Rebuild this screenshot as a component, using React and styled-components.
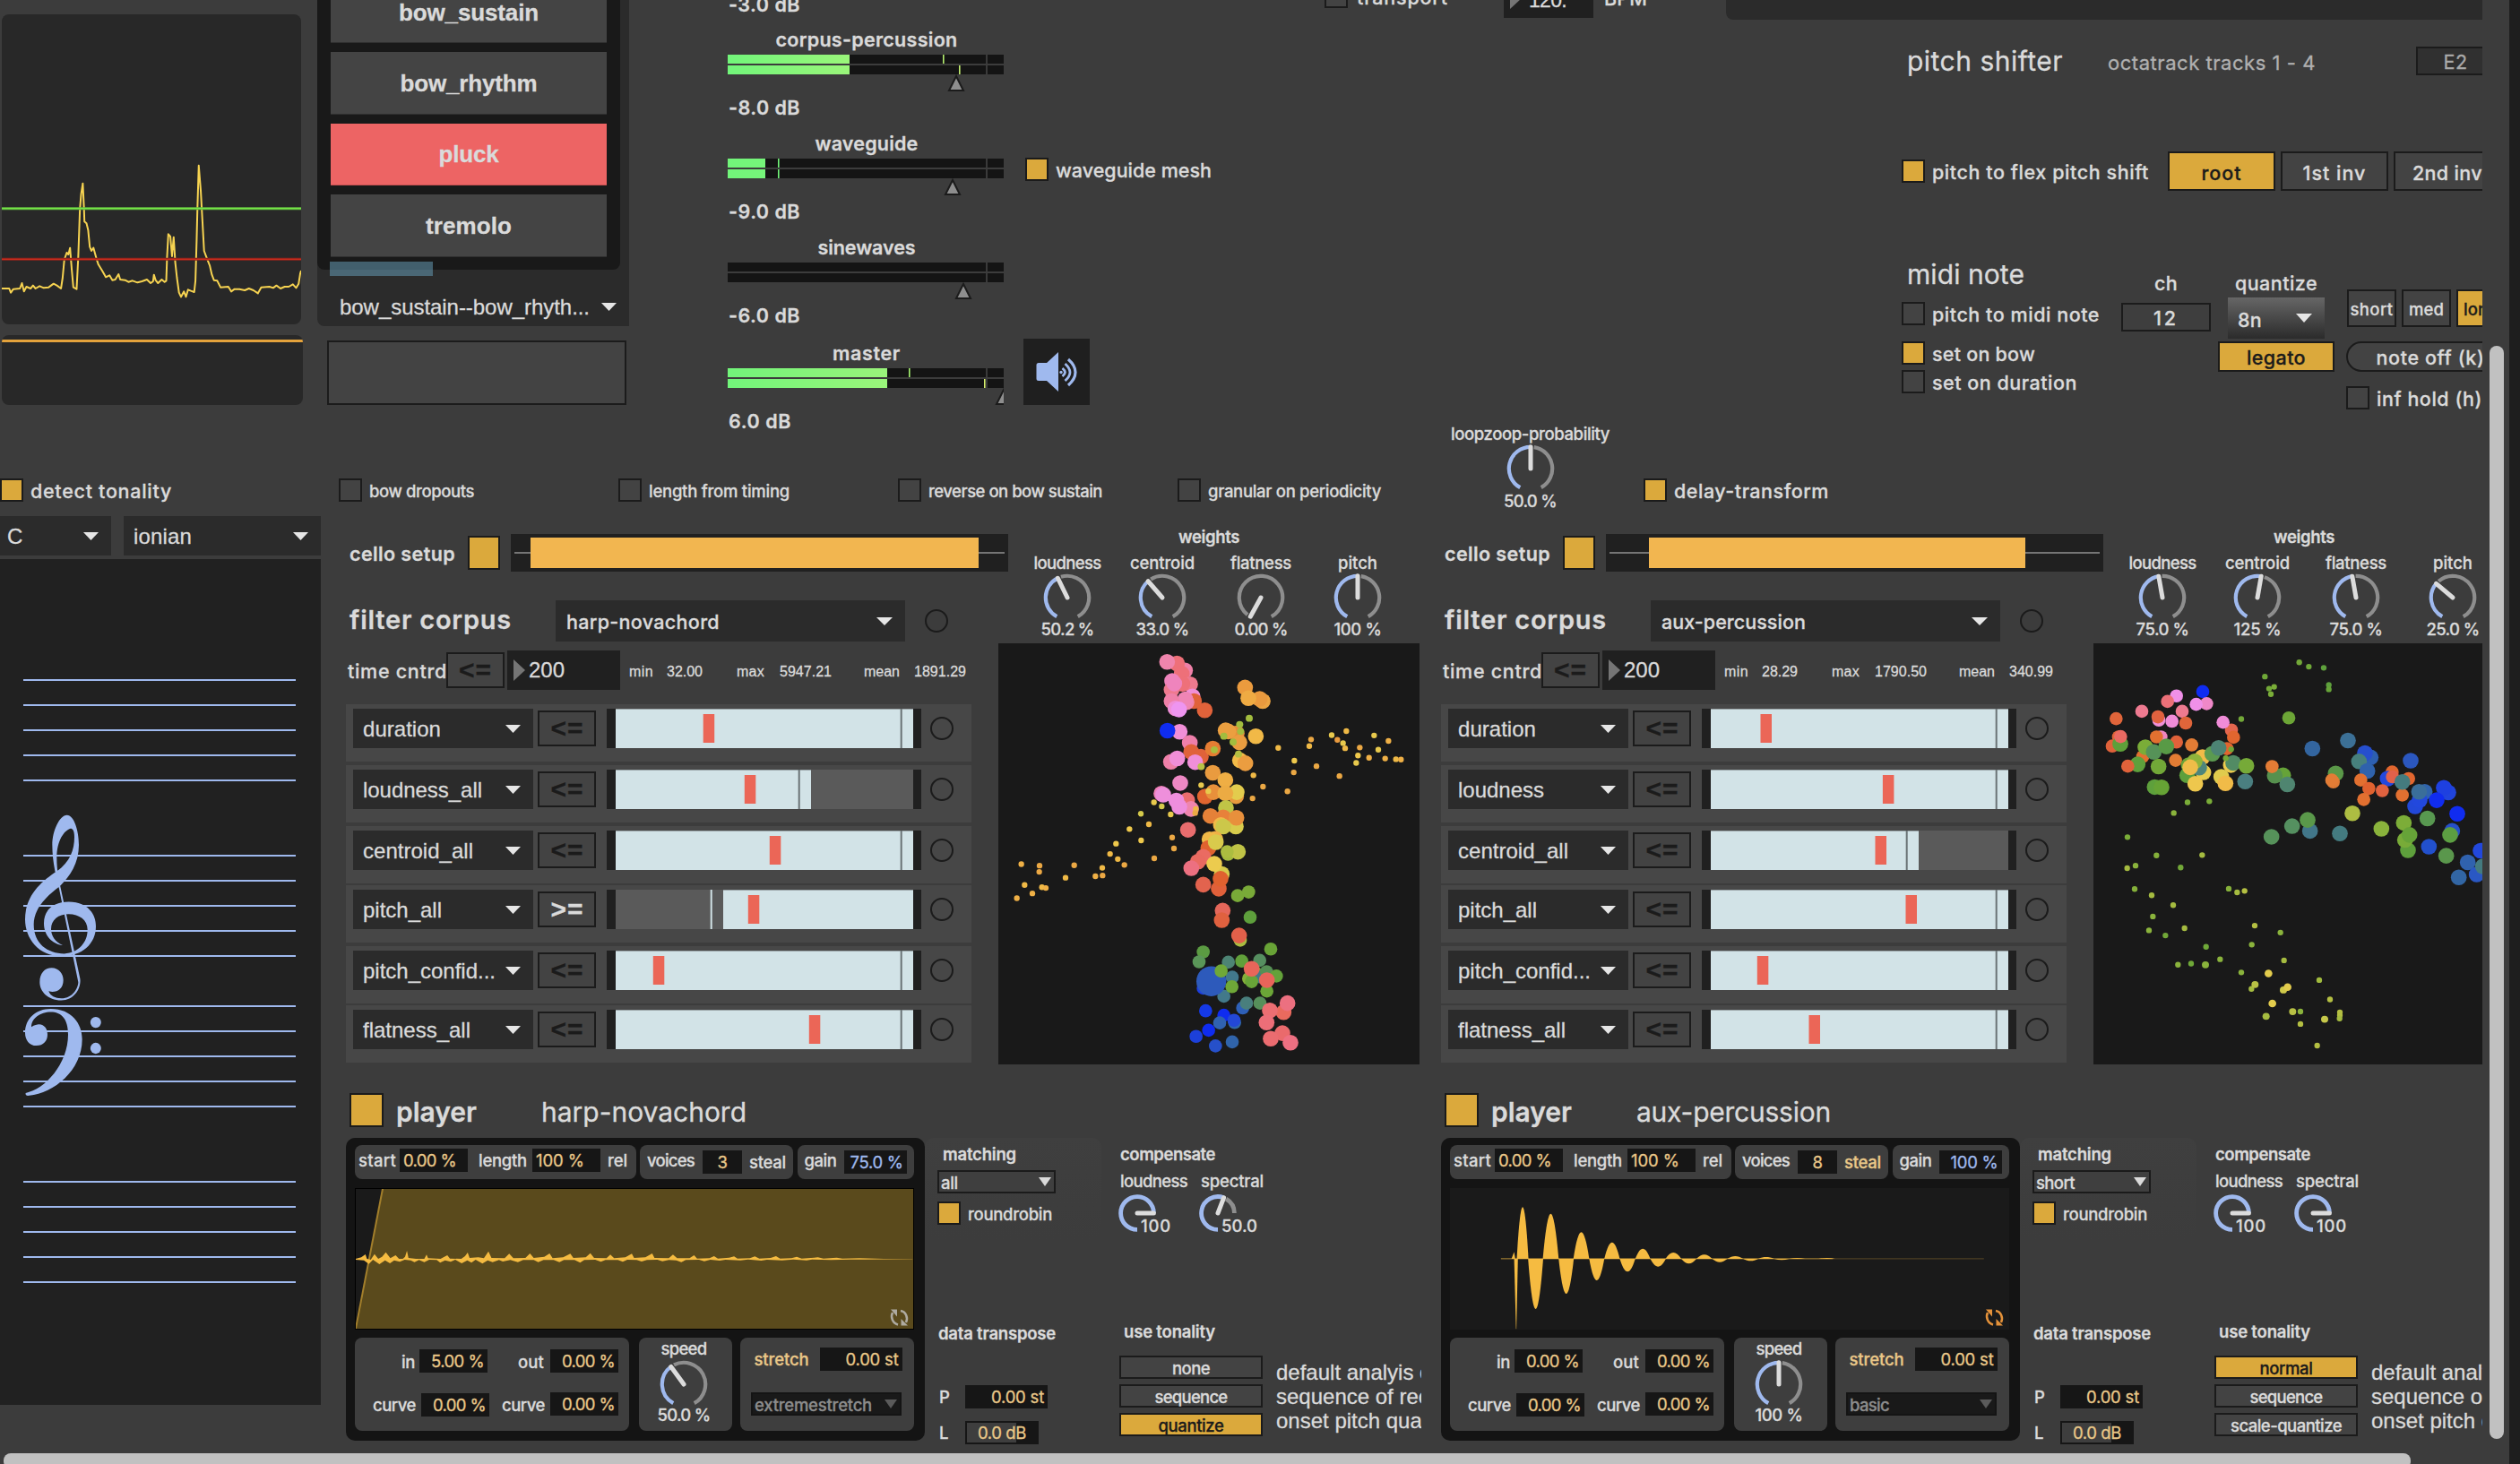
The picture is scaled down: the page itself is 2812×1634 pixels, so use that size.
import React, { useLayoutEffect, useRef } from "react";
import styled, { createGlobalStyle, css } from "styled-components";

const c = {
  bg: "#3c3c3c",
  line: "#1b1b1b",
  text: "#dadada",
  amber: "#dba93c",
  blue: "#9fb9ee",
  sand: "#e9c788",
  field: "#161616",
  control: "#434343",
  menu: "#2b2b2b",
  number: "#202020",
};

const GlobalStyle = createGlobalStyle`
  * { box-sizing: border-box; }
  html, body { margin: 0; padding: 0; background: ${c.bg}; overflow: hidden; }
  body { font-family: Inter, "Liberation Sans", sans-serif; color: ${c.text}; -webkit-text-stroke: 0.3px; }
  svg { display: block; }
`;

const offset = css`
  margin-left: ${(p) => p.$ml || 0}px;
  margin-top: ${(p) => p.$mt || 0}px;
  flex-shrink: 0;
`;

/* ---------- text ---------- */

const TextBox = styled.div`
  ${offset}
  width: ${(p) => p.$w}px;
  height: ${(p) => p.$lh || 24}px;
  line-height: ${(p) => p.$lh || 24}px;
  font-size: ${(p) => p.$size || 21.5}px;
  font-weight: ${(p) => p.$weight || 500};
  font-family: ${(p) => (p.$arial ? '"Liberation Sans", Arial, sans-serif' : 'Inter, "Liberation Sans", sans-serif')};
  color: ${(p) => p.$color || c.text};
  white-space: pre;
`;

/* Spreads the letters so that the string is exactly `w` pixels wide. */
function Text({ w, size, weight, color, arial, lh, ml, mt, children }) {
  const ref = useRef(null);
  useLayoutEffect(() => {
    const span = ref.current;
    span.style.letterSpacing = "0px";
    const natural = span.getBoundingClientRect().width;
    span.style.letterSpacing = `${(w - natural) / String(children).length}px`;
  }, [w, size, weight, children]);
  return (
    <TextBox $w={w} $size={size} $weight={weight} $color={color} $arial={arial} $lh={lh} $ml={ml} $mt={mt}>
      <span ref={ref}>{children}</span>
    </TextBox>
  );
}

/* ---------- generic parts ---------- */

const Row = styled.div`
  ${offset}
  display: flex;
  align-items: ${(p) => p.$align || "center"};
  gap: ${(p) => p.$gap || 0}px;
  height: ${(p) => (p.$h ? `${p.$h}px` : "auto")};
`;

const Column = styled.div`
  ${offset}
  display: flex;
  flex-direction: column;
  align-items: ${(p) => p.$align || "flex-start"};
  width: ${(p) => (p.$w ? `${p.$w}px` : "auto")};
`;

const Box = styled.div`
  ${offset}
  width: ${(p) => p.$w || 26}px;
  height: ${(p) => p.$h || 26}px;
  border: 2px solid ${c.line};
  background: ${(p) => (p.$on ? c.amber : c.control)};
`;

const Button = styled.div`
  ${offset}
  display: flex;
  align-items: center;
  justify-content: ${(p) => p.$justify || "center"};
  padding-left: ${(p) => p.$pad || 0}px;
  width: ${(p) => p.$w}px;
  height: ${(p) => p.$h}px;
  border: 2px solid ${c.line};
  border-radius: ${(p) => p.$radius || 0}px;
  background: ${(p) => p.$bg || (p.$on ? c.amber : c.control)};
`;

const Menu = styled.div`
  ${offset}
  display: flex;
  align-items: center;
  justify-content: space-between;
  width: ${(p) => p.$w}px;
  height: ${(p) => p.$h || 44}px;
  padding: 0 ${(p) => p.$pr || 14}px 0 ${(p) => p.$pl || 11}px;
  background: ${(p) => p.$bg || c.menu};
`;

const Field = styled.div`
  ${offset}
  display: flex;
  align-items: center;
  justify-content: ${(p) => p.$justify || "flex-end"};
  width: ${(p) => p.$w || 76}px;
  height: 26px;
  padding: 0 4px;
  background: ${c.field};
`;

const Ring = styled.div`
  ${offset}
  width: 26px;
  height: 26px;
  border: 2px solid ${c.line};
  border-radius: 50%;
`;

const Arrow = ({ color = "#e6e6e6", w = 17, h = 9 }) => (
  <svg width={w} height={h} viewBox="0 0 17 9" preserveAspectRatio="none">
    <path d="M0 0H17L8.5 9Z" fill={color} />
  </svg>
);

const NumberBox = styled.div`
  ${offset}
  display: flex;
  align-items: center;
  width: ${(p) => p.$w}px;
  height: ${(p) => p.$h || 44}px;
  padding-left: 7px;
  background: ${c.number};
`;

const NumberMark = () => (
  <svg width="13" height="24" viewBox="0 0 13 24">
    <path d="M0 0L13 12L0 24Z" fill="#757575" />
  </svg>
);

function Check({ on, w, label, size = 21.5, weight = 500, ml, mt, gap = 8 }) {
  return (
    <Row $gap={gap} $ml={ml} $mt={mt} $h={26}>
      <Box $on={on} />
      <Text w={w} size={size} weight={weight} mt={2}>{label}</Text>
    </Row>
  );
}

/* ---------- dials ---------- */

const polar = (center, r, deg) => {
  const a = (deg * Math.PI) / 180;
  return [center + r * Math.sin(a), center - r * Math.cos(a)];
};

const arc = (center, r, from, to) => {
  const [x1, y1] = polar(center, r, from);
  const [x2, y2] = polar(center, r, to);
  return `M${x1} ${y1}A${r} ${r} 0 ${to - from > 180 ? 1 : 0} 1 ${x2} ${y2}`;
};

function Dial({ angle, size = 54, r = 24.2, stroke = 4.2, from = -151, to = 151 }) {
  const m = size / 2;
  const [x, y] = polar(m, r, angle);
  return (
    <svg width={size} height={size} viewBox={`0 0 ${size} ${size}`} fill="none">
      {angle + 9 < to && <path d={arc(m, r, angle + 9, to)} stroke="#8e8e8e" strokeWidth={stroke} />}
      {angle > from && <path d={arc(m, r, from, angle)} stroke={c.blue} strokeWidth={stroke} />}
      <path d={`M${m} ${m}L${x} ${y}`} stroke="#dcdcdc" strokeWidth={5} strokeLinecap="round" />
    </svg>
  );
}

const KnobCell = styled.div`
  ${offset}
  display: flex;
  flex-direction: column;
  align-items: center;
  width: ${(p) => p.$w || 74}px;
`;

function Knob({ label, lw, value, vw, angle, ml, mt, w }) {
  return (
    <KnobCell $ml={ml} $mt={mt} $w={w}>
      <Text w={lw} size={18.5}>{label}</Text>
      <Dial angle={angle} />
      <Text w={vw} size={18.5} lh={20} mt={-1.5}>{value}</Text>
    </KnobCell>
  );
}

const MiniKnobCell = styled.div`
  ${offset}
  position: relative;
  width: 74px;
`;

const MiniValue = styled.div`
  position: absolute;
  left: 26px;
  bottom: -2px;
`;

function MiniKnob({ label, lw, value, vw, angle, ml }) {
  return (
    <MiniKnobCell $ml={ml}>
      <Text w={lw} size={18.5} ml={3} lh={22}>{label}</Text>
      <Row $mt={3}><Dial angle={angle} size={44} r={18.4} stroke={4.8} from={-180} to={90} /></Row>
      <MiniValue><Text w={vw} size={18.5} lh={20}>{value}</Text></MiniValue>
    </MiniKnobCell>
  );
}

/* ---------- frame ---------- */

const Window = styled.div`
  display: flex;
  width: 2812px;
  height: 1634px;
  overflow: hidden;
  background: ${c.bg};
`;

const Main = styled.div`
  display: flex;
  flex-direction: column;
  width: 2770px;
  height: 1634px;
  flex-shrink: 0;
`;

const Patcher = styled.div`
  width: 2770px;
  height: 1622px;
  overflow: hidden;
  flex-shrink: 0;
`;

const HScroll = styled.div`
  width: 2686px;
  height: 17px;
  margin-left: 4px;
  border-radius: 8px;
  background: #c1c1c1;
  flex-shrink: 0;
`;

const Gutter = styled.div`
  width: 30px;
  height: 1634px;
  padding: 386px 6px 0 8px;
  flex-shrink: 0;
`;

const VThumb = styled.div`
  height: 1220px;
  border-radius: 8px;
  background: #c1c1c1;
`;

const Edge = styled.div`
  width: 12px;
  height: 1634px;
  background: #1e1e1e;
  flex-shrink: 0;
`;

const TopBand = styled.div`
  display: flex;
  align-items: flex-start;
  width: 2770px;
  height: 472px;
`;

const BottomBand = styled.div`
  display: flex;
  align-items: flex-start;
  width: 2770px;
  height: 1150px;
`;

/* ---------- scopes ---------- */

const Scopes = styled.div`
  display: flex;
  flex-direction: column;
  gap: 12px;
  width: 338px;
  padding: 16px 0 0 2px;
  flex-shrink: 0;
`;

const Scope = styled.div`
  width: ${(p) => p.$w}px;
  height: ${(p) => p.$h}px;
  border-radius: 8px;
  background: #282828;
  overflow: hidden;
`;

const trace =
  "4,966 22,966 26,980 32,968 48,966 53,948 58,976 64,960 74,966 80,956 86,966 96,958 106,964 118,962 130,950 138,956 148,966 152,930 156,870 162,846 166,852 170,830 174,900 178,962 186,968 190,860 194,700 197,650 201,614 204,700 205,742 210,748 214,770 218,826 222,840 227,830 234,865 239,886 248,906 257,928 266,922 273,938 280,936 288,918 292,936 304,938 312,944 322,940 334,946 345,942 357,936 366,948 372,942 374,920 378,938 384,948 393,936 400,944 404,940 406,860 409,784 414,792 418,858 422,794 426,880 430,930 435,980 440,994 447,976 452,994 457,970 464,974 472,978 475,940 478,800 480,690 483,554 488,640 492,740 496,840 502,862 510,890 515,920 520,938 528,940 536,962 555,960 562,976 570,968 582,968 595,972 605,966 616,972 627,982 635,962 655,960 664,964 672,956 682,966 692,960 702,960 712,952 720,964 726,950 730,915 732,906";

const ScopeColumn = () => (
  <Scopes>
    <Scope $w={334} $h={346}>
      <svg width="334" height="346" viewBox="4 48 728 1038" preserveAspectRatio="none" fill="none">
        <polyline points={trace} stroke="#f6d351" strokeWidth="2" strokeLinejoin="round" vectorEffect="non-scaling-stroke" />
        <path d="M4 698H732" stroke="#62b83f" strokeWidth="3" vectorEffect="non-scaling-stroke" />
        <path d="M4 698H732" stroke="#79f04a" strokeWidth="1" vectorEffect="non-scaling-stroke" />
        <path d="M4 868H732" stroke="#8e231c" strokeWidth="3" vectorEffect="non-scaling-stroke" />
        <path d="M4 868H732" stroke="#d8301f" strokeWidth="1" vectorEffect="non-scaling-stroke" />
      </svg>
    </Scope>
    <Scope $w={336} $h={78}>
      <svg width="336" height="78" viewBox="0 0 336 78">
        <path d="M0 6.5H336" stroke="#e3a23c" strokeWidth="3" />
      </svg>
    </Scope>
  </Scopes>
);

/* ---------- gestures ---------- */

const GesturePanel = styled.div`
  width: 348px;
  height: 364px;
  background: ${c.menu};
  border-bottom-left-radius: 8px;
`;

const GestureList = styled.div`
  display: flex;
  flex-direction: column;
  gap: 10px;
  width: 338px;
  height: 301px;
  padding: 0 15px;
  overflow: hidden;
  background: #191919;
  border-radius: 0 0 8px 8px;
`;

const GestureButton = styled.div`
  display: flex;
  align-items: center;
  justify-content: center;
  height: 69.4px;
  margin-top: ${(p) => p.$mt || 0}px;
  flex-shrink: 0;
  background: ${(p) => (p.$on ? "#ed6464" : "#444444")};
  border-bottom: 1px solid ${(p) => (p.$on ? "#c24f50" : "#303030")};
`;

const GestureProgress = styled.div`
  width: 115px;
  height: 16px;
  margin: -9px 0 0 14px;
  background: rgba(104, 159, 186, 0.52);
`;

const gestures = [
  ["bow_sustain", 156],
  ["bow_rhythm", 153],
  ["pluck", 67],
  ["tremolo", 96],
];

const GestureColumn = () => (
  <Column $ml={16}>
    <GesturePanel>
      <GestureList>
        {gestures.map(([name, w], i) => (
          <GestureButton key={name} $on={name === "pluck"} $mt={i === 0 ? -21 : 0}>
            <Text w={w} size={26} weight={700} arial lh={30} mt={1}>{name}</Text>
          </GestureButton>
        ))}
      </GestureList>
      <GestureProgress />
      <Menu $ml={14} $mt={12} $w={334}>
        <Text w={279} size={24} weight={400} arial mt={1}>bow_sustain--bow_rhyth...</Text>
        <Arrow />
      </Menu>
    </GesturePanel>
    <Button $w={334} $h={72} $ml={11} $mt={16} />
  </Column>
);

/* ---------- mixer ---------- */

const Strip = styled.div`
  display: flex;
  flex-direction: column;
  align-items: center;
  width: 308px;
  height: 116px;
  margin-top: ${(p) => p.$mt || 0}px;
`;

const StripValue = styled.div`
  align-self: flex-start;
  padding-left: 2px;
  margin-top: 6px;
`;

function Meter({ level, peaks, colors, handle }) {
  return (
    <svg width="308" height="41" viewBox="0 0 308 41">
      <defs>
        <linearGradient id={`m${level}`}>
          <stop offset="0" stopColor="#72f57a" />
          <stop offset="1" stopColor={level > 100 ? "#9af57a" : "#76f57a"} />
        </linearGradient>
      </defs>
      {[0, 12].map((y, i) => (
        <g key={y}>
          <rect y={y} width="308" height="10" fill="#141414" />
          <rect y={y} width={level} height="10" fill={`url(#m${level})`} />
          <rect x="288" y={y} width="2" height="10" fill="#3a3a3a" />
          {peaks && <rect x={peaks[i]} y={y} width="1.6" height="10" fill={colors[i]} />}
        </g>
      ))}
      <path d={`M${handle} 24L${handle + 8} 40H${handle - 8}Z`} fill="#8e8e8e" stroke={c.line} strokeWidth="2" />
    </svg>
  );
}

const strips = [
  { name: "corpus-percussion", w: 203, db: "-8.0 dB", level: 136, peaks: [240, 258], colors: ["#b5f070", "#c3f070"], handle: 255 },
  { name: "waveguide", w: 115, db: "-9.0 dB", level: 42, peaks: [56, 56], colors: ["#72f57a", "#72f57a"], handle: 251 },
  { name: "sinewaves", w: 109, db: "-6.0 dB", level: 0, handle: 263 },
  { name: "master", w: 76, db: "6.0 dB", dbw: 70, level: 178, peaks: [202, 286], colors: ["#a5f270", "#d8f070"], handle: 308 },
];

const Mixer = () => (
  <Column $ml={110} $w={308}>
    <Text w={80} ml={1} mt={-7} weight={600}>-3.0 dB</Text>
    <Column $mt={14}>
      {strips.map((s, i) => (
        <Strip key={s.name} $mt={i === 3 ? 2 : 0}>
          <Text w={s.w} ml={2} mt={0.5} weight={600}>{s.name}</Text>
          <Row $mt={5.5}><Meter {...s} /></Row>
          <StripValue><Text w={s.dbw || 80} ml={-1} weight={600}>{s.db}</Text></StripValue>
        </Strip>
      ))}
    </Column>
  </Column>
);

const SpeakerButton = styled.div`
  width: 74px;
  height: 74px;
  margin-top: 176px;
  background: #1f1f1f;
`;

const SideSwitches = () => (
  <Column $ml={22} $w={336}>
    <Check on w={174} label="waveguide mesh" ml={2} mt={176} />
    <SpeakerButton>
      <svg width="74" height="74" viewBox="0 0 74 74" fill="none" stroke={c.blue} strokeWidth="2.8">
        <path d="M17 27H26L39 15V59L26 47H17Q14.5 47 14.5 44.500V29.500Q14.500 27 17 27Z" fill={c.blue} stroke="none" />
        <path d="M50 23Q58 30 58 37.500T50 52" strokeWidth="3.200" />
        <path d="M46.500 28Q52 33 52 37.500T46.500 47" />
        <path d="M43.500 33Q46.500 35.500 46.500 37.500T43.500 42" />
        <circle cx="42" cy="37.500" r="1.700" fill={c.blue} stroke="none" />
      </svg>
    </SpeakerButton>
  </Column>
);

/* ---------- transport and pitch ---------- */

const Transport = () => (
  <Row $mt={-25} $h={45} $align="flex-start">
    <Row $h={45}><Check w={102} label="transport" gap={10} mt={-3} /></Row>
    <NumberBox $ml={62} $w={100} $h={45}>
      <NumberMark />
      <Text w={42} arial size={23} weight={400} ml={8} mt={4}>120.</Text>
    </NumberBox>
    <Row $h={45}><Text w={48} ml={12} mt={1}>BPM</Text></Row>
  </Row>
);

const RightPanel = styled.div`
  display: flex;
  flex-direction: column;
  width: 900px;
  margin-left: 88px;
  flex-shrink: 0;
`;

const DarkStrip = styled.div`
  height: 22px;
  background: ${c.menu};
  border-bottom-left-radius: 8px;
`;

const QuantizeMenu = styled(Menu)`
  background: linear-gradient(#666666, #2b2b2b);
`;

const PitchArea = () => (
  <RightPanel>
    <DarkStrip />
    <Row $mt={30} $h={32}>
      <Text w={174} size={30} ml={202} lh={34} weight={400}>pitch shifter</Text>
      <Text w={232} size={22} ml={50} mt={4} weight={400} color="#b0b0b0">octatrack tracks 1 - 4</Text>
      <Button $w={88} $h={32} $ml={112} $bg="#303030">
        <Text w={27} weight={400} mt={2} color="#a9a9a9">E2</Text>
      </Button>
    </Row>
    <Row $mt={85} $h={44} $ml={196} >
      <Check on w={242} label="pitch to flex pitch shift" />
      <Button $on $w={120} $h={44} $ml={21}><Text w={45} mt={3} color={c.line}>root</Text></Button>
      <Button $w={120} $h={44} $ml={6}><Text w={71} mt={3}>1st inv</Text></Button>
      <Button $w={120} $h={44} $ml={6}><Text w={78} mt={3}>2nd inv</Text></Button>
    </Row>
    <Row $align="flex-start" $ml={196}>
      <Column $w={245}>
        <Text w={131} size={30} lh={32} ml={6} mt={77} weight={400}>midi note</Text>
        <Check w={187} label="pitch to midi note" mt={15} />
        <Check on w={115} label="set on bow" mt={18} />
        <Check w={162} label="set on duration" mt={6} />
      </Column>
      <Column $w={100} $align="center">
        <Text w={26} mt={91}>ch</Text>
        <Button $w={100} $h={32} $mt={10} $bg="#3e3e3e"><Text w={28} mt={1}>12</Text></Button>
      </Column>
      <Column $w={130} $ml={8} $align="center">
        <Text w={92} mt={91}>quantize</Text>
        <QuantizeMenu $w={108} $h={46} $mt={4}>
          <Text w={27} mt={3}>8n</Text>
          <Arrow w={18} h={10} />
        </QuantizeMenu>
        <Button $on $w={130} $h={34} $mt={3}><Text w={66} mt={1} color={c.line}>legato</Text></Button>
      </Column>
      <Column $ml={13}>
        <Row $gap={6} $ml={1} $mt={110}>
          <Button $w={55} $h={42}><Text w={48} size={18.5} mt={1}>short</Text></Button>
          <Button $w={55} $h={42}><Text w={39} size={18.5} mt={1}>med</Text></Button>
          <Button $on $w={55} $h={42}><Text w={39} size={18.5} mt={1} color={c.line}>long</Text></Button>
        </Row>
        <Button $w={188} $h={34} $radius={17} $mt={16}><Text w={121} mt={1}>note off (k)</Text></Button>
        <Check w={118} label="inf hold (h)" mt={16} />
      </Column>
    </Row>
  </RightPanel>
);

/* ---------- tonality ---------- */

const StaffPanel = styled.div`
  width: 358px;
  height: 944px;
  margin-top: 4px;
  background: #212121;
`;

const staves = [135, 331, 499, 695];

const Tonality = () => (
  <Column $w={386}>
    <Check on w={158} label="detect tonality" mt={62} />
    <Row $gap={14} $mt={16}>
      <Menu $w={124} $pl={8}><Text w={18} arial size={24} weight={400} mt={1}>C</Text><Arrow /></Menu>
      <Menu $w={220}><Text w={65} arial size={24} weight={400} mt={1}>ionian</Text><Arrow /></Menu>
    </Row>
    <StaffPanel>
      <svg width="358" height="944" viewBox="0 0 358 944">
        {staves.map((top) =>
          [0, 28, 56, 84, 112].map((dy) => <rect key={top + dy} x="26" y={top + dy - 1} width="304" height="2" fill={c.blue} />)
        )}
        <g fill={c.blue} transform="translate(0 -123.700) scale(0.33333 0.72322)">
          <path d="M210 767C175 765 147 752 147 733C147 712 180 700 230 700C285 700 321 715 321 738C321 765 275 784 205 784C130 784 84 757 84 727C84 690 140 668 190 653C235 638 249 620 249 600C249 590 243 587 236 587C215 590 190 605 190 633C190 650 196 662 200 672L268 818C273 832 250 852 205 852C160 852 133 838 133 824C133 810 150 802 173 802C197 802 212 811 212 821C212 833 195 839 175 839C168 839 163 838 163 838C168 845 185 849 205 849C245 849 262 832 262 824L198 680C190 665 175 640 175 612C175 590 200 566 224 566C248 566 264 590 264 612C264 640 235 660 200 676C150 693 113 712 113 735C113 765 160 780 215 780C265 778 293 762 293 743C293 728 265 719 230 719C195 719 171 728 171 742C171 752 185 762 210 767Z" />
          <path d="M86 995C150 990 228 950 228 905C228 880 205 870 170 870C135 870 105 880 105 893C115 890 125 889 130 889C150 889 159 897 159 905C159 915 145 922 122 922C98 922 84 913 84 902C84 880 120 865 170 865C240 865 275 888 275 912C275 960 180 995 98 999C88 1000 84 997 86 995Z" />
          <ellipse cx="320.500" cy="886" rx="18" ry="8.500" />
          <ellipse cx="320.500" cy="926" rx="18" ry="8.500" />
        </g>
      </svg>
    </StaffPanel>
  </Column>
);

/* ---------- corpus module ---------- */

const Module = styled.div`
  display: flex;
  flex-direction: column;
  width: 1222px;
  flex-shrink: 0;
`;

const CorpusArea = styled.div`
  display: flex;
  align-items: flex-start;
  height: 592px;
`;

const CorpusLeft = styled.div`
  display: flex;
  flex-direction: column;
  width: 728px;
  flex-shrink: 0;
`;

const RangeSlider = styled.div`
  display: flex;
  align-items: center;
  width: 555px;
  height: 42px;
  margin-left: 12px;
  padding: 0 4px;
  background: ${c.number};
  flex-shrink: 0;
`;

const RangeTrack = styled.div`
  height: 2px;
  width: ${(p) => p.$w}px;
  background: #757575;
`;

const RangeFill = styled.div`
  width: ${(p) => p.$w}px;
  height: 34px;
  background: #f2b650;
`;

const FilterList = styled.div`
  display: flex;
  flex-direction: column;
  width: 698px;
  margin-top: 16px;
`;

const FilterRow = styled.div`
  display: flex;
  align-items: flex-start;
  height: 64px;
  margin-bottom: ${(p) => p.$mb}px;
  padding: 5px 0 0 8px;
  background: #474747;
`;

const Track = styled.div`
  display: flex;
  height: 44px;
  width: 351px;
  margin-left: 12px;
  padding: 0 9.5px;
  background: ${c.number};
  flex-shrink: 0;
`;

const FilterTrack = ({ row }) => {
  const { marker, op, limit } = row;
  const lo = op === ">=" ? limit : 0;
  const hi = op === ">=" ? 332 : limit;
  const knob = op === ">=" ? lo - 13.5 : hi - 13.5;
  return (
    <Track>
      <svg width="332" height="44" viewBox="0 0 332 44">
        <rect width="332" height="44" fill="#5a5a5a" />
        <rect x={lo} width={hi - lo} height="44" fill="#d2e3e7" />
        <rect x={lo} width={hi - lo} height="1" fill="#9aa5a8" />
        <rect x={knob - 0.8} width="2" height="44" fill={op === ">=" ? "#d2e3e7" : "#6a7375"} />
        <rect x={marker + 0.3} y="6" width="12.500" height="32" fill="#eb6657" />
      </svg>
    </Track>
  );
};

const Compare = ({ op, ml, mt }) => (
  <Button $w={65} $h={40} $ml={ml} $mt={mt}>
    <Text w={37} size={30} weight={700} arial lh={36} color={op === ">=" ? c.text : c.line}>{op}</Text>
  </Button>
);

const Plot = styled.div`
  width: 470px;
  height: 470px;
  margin-top: 6px;
  background: #191919;
  overflow: hidden;
`;

const sizes = { L: [50, 41], B: [26.5, 21.5], M: [22, 18], G: [12, 9.5], Y: [13, 10.5], S: [9.5, 7.8] };

const parse = (text) =>
  text.trim().split(/\s+/).map((item) => {
    const [x, y, color, size] = item.split(",");
    return { x, y, color: `#${color}`, size };
  });

const harpPoints = parse(`
667,461,ef80a8,B 640,442,ee7079,B 607,438,ef85ad,B 656,470,ee7079,B 684,499,ee7a8f,B 658,498,ee7079,B 624,490,ef84bd,B 622,514,ee7a8f,B 631,497,ef84bd,B 692,532,f08fd8,B
697,545,e0623a,B 672,548,ef85ad,B 668,540,ef85b5,B 622,545,ef80a8,B 635,565,f08fd8,B 647,568,ee95f0,B 733,570,e0623a,B 649,629,f08fd8,B 608,626,0f2cf0,B 683,659,ee7fab,B
688,684,e0623a,B 720,697,e0623a,B 620,711,ef80a8,B 641,702,f08fd8,B 701,712,f08fd8,B 651,769,ee88c4,B 588,798,ef80b8,B 594,801,ee8fdb,B 674,816,e96d6e,B 687,840,ef85ad,B
638,817,ee8edd,B 648,834,ee8edd,B 677,897,e96d6e,B 868,508,eb9b3e,B 927,545,eda542,B 917,539,ea9a3e,B 879,537,efab43,B 840,633,e78c3a,B 803,625,eb9f40,B 812,628,eb9f40,B
904,641,f1b947,B 849,658,ea9d40,B 760,675,e57d33,B 851,707,f2bb48,B 869,715,eb9d40,B 760,741,e99b3f,B 802,761,efae44,B 734,806,e0652f,B 762,794,e8903b,B 838,805,e79a3e,B
840,794,e3cc4d,B 802,797,ecab43,B 804,837,c0c446,B 795,863,e8813a,B 752,859,e58138,B 787,884,f0ba48,B 837,888,d8cc4c,B 839,864,e8903c,B 795,888,ccc74a,B 768,922,efb046,B
749,923,f0b947,B 745,947,e0622f,B 770,931,d9ca4c,B 728,971,ea6b62,B 710,984,e96a60,B 688,1002,ec7080,B 811,964,a4bb3f,M 844,957,c0c346,B 808,957,acbd40,M 790,1018,d5ca4b,B
765,990,eccb4e,B 728,1047,e2634e,B 780,1058,e0603a,B 786,1031,e0612f,B 843,1077,79aa38,M 880,1067,79aa38,M 793,1118,e4675a,B 790,1144,e0613f,B 885,1136,5e9f3c,M 852,1199,a9bc40,M
848,1186,e2604a,B 954,1223,68a336,M 728,1231,5b9b42,M 714,1258,5a9658,M 812,1259,4d8474,M 857,1256,61a03a,M 917,1254,568f60,M 728,1330,1d3fe0,M 797,1352,42798a,M 825,1300,42788c,M
755,1311,2d5abb,L 788,1283,6fa838,M 824,1326,6fa838,M 880,1304,85af3a,M 903,1288,74a938,M 921,1300,42798a,M 940,1285,568f55,M 973,1297,63a23a,M 890,1312,68a438,M 890,1277,e8665a,B
941,1338,6ba637,M 941,1308,e8645a,B 860,1384,2e60b8,M 873,1371,497f7d,M 918,1371,56905a,M 997,1396,ea6a5e,B 951,1391,ec6e72,B 1010,1371,ec7080,B 940,1424,ec6e78,B 736,1392,1539e6,M
797,1404,0f2cf0,M 833,1424,3068a8,M 831,1418,2348d6,M 783,1425,3062b0,M 746,1445,0f2cf0,M 704,1462,1c40da,M 769,1488,2650ca,M 825,1477,3064aa,M 993,1453,ea6a6c,B 954,1468,eb6c70,B
1020,1479,ee7082,B 882,592,a2bc3e,G 850,609,a2bc3e,G 853,628,a2bc3e,G 797,641,a2bc3e,G 828,657,a2bc3e,G 765,678,a9bd3e,G 846,690,b4bf42,G 721,724,b9c145,G 721,775,e8c94d,S
745,791,e8c94d,S 896,748,efb946,S 928,779,eba844,S 893,811,eba844,S 979,673,efb946,S 1083,668,efb946,S 1089,650,eba844,S 1033,708,efc94c,S 1031,740,eba844,S 1010,792,eba844,S
1107,723,eba844,S 1158,638,e8c94d,S 1177,651,e99b3f,S 1207,627,efb946,S 1196,660,e8c94d,S 1203,674,efb946,S 1252,672,eba844,S 1246,694,efc94c,S 1240,714,e8c94d,S 1283,700,efb046,S
1300,639,e8c94d,S 1314,678,e8c94d,S 1348,654,efb046,S 1337,702,efb046,S 1373,704,efb946,S 1390,705,efb046,S 1184,750,eba844,S 563,822,e8c94d,S 589,833,d5ca4b,S 519,853,d5ca4b,S
619,855,e8c94d,S 481,895,efc94c,S 546,882,efb946,S 520,926,efc94c,S 436,935,efc94c,S 416,963,efb946,S 442,977,efb946,S 464,993,eba844,S 624,918,eba844,S 630,948,eba844,S
564,975,eba844,S 390,1001,efb946,S 367,1024,efb046,S 391,1022,eba844,S 296,994,eba844,S 267,1028,efb946,S 180,995,eba844,S 179,1012,eba844,S 119,991,efb046,S 130,1048,efb946,S
156,1071,efb046,S 188,1054,efb946,S 201,1056,efb046,S 104,1084,efb046,S 703,840,efb946,S 701,851,eba844,S`);

const auxPoints = parse(`
356,531,f090e8,M 326,546,ec7078,M 444,519,0f2cf0,M 457,552,ef88c8,M 422,554,f090e8,M 240,573,ee7a90,M 375,573,ee7a90,M 154,593,e0653a,M 297,597,f08fd8,M 294,588,e0623f,M
341,600,f08cd8,M 387,605,e0653a,M 540,624,e4664e,M 512,603,f08cd8,M 547,644,e1662f,M 304,643,ef85c0,M 356,657,e0623a,M 289,643,e27030,M 162,643,e0653a,M
141,668,e0623a,M 168,662,5ea03a,B 169,642,ea6a62,M 407,665,e37c35,M 525,675,e0652f,M 243,697,e27030,M 226,718,5ea03c,B 193,723,e0623a,M 252,671,7aad38,B 280,684,569258,B
322,669,589a46,B 296,724,72a838,B 353,707,e27c34,M 392,748,5d9f3c,B 397,720,6aa338,B 443,698,f1bb48,B 446,740,e6cc4e,B 432,727,4e857a,B 417,710,8fb33b,B 402,726,f0bd49,B
476,689,5b9a50,B 538,720,eccb4e,B 497,673,4d8474,B 506,752,e0cb4d,B 520,770,f1bb48,B 419,771,eec74d,B 546,714,528b64,B 590,722,76aa38,B 586,765,4a7f80,B 283,780,5ea03c,B
306,781,66a335,B 713,748,66a338,B 685,749,56914e,B 676,724,e37c35,M 727,773,4f8570,B 732,591,6ca536,M 811,675,33659f,B 930,653,3c7096,B 889,743,5a9848,B 881,766,de7a34,M
876,761,e37c35,M 1006,699,2d5fb0,B 987,687,264fce,B 967,710,47807c,B 995,736,2f62ac,B 1140,708,2b57bf,B 1078,739,e1662f,M 1063,757,2248dd,B 1133,757,e1662f,M 1079,752,e2614a,M
973,761,e27030,M 1000,784,e0622f,M 983,814,e27030,M 1045,790,e1623f,M 1112,802,e27030,M 1112,766,447b7e,B 1187,793,3064ac,B 1155,833,2248d8,B 1170,816,2248dd,B 1168,793,3a6e9a,B
1266,795,2044dc,B 1251,782,1e40e0,B 1227,816,102cf0,B 1296,853,102cf0,B 945,852,adbd42,B 1042,894,8ab33c,B 1117,878,7cad38,B 1131,953,5ea03c,B 1121,925,78ab38,B 1136,911,66a338,B
1196,866,589850,B 1279,900,2650c8,B 1272,911,5c9f42,B 1201,943,2250cc,B 1259,968,5a974c,B 903,907,447b80,B 803,900,42778a,B 795,870,5a984a,B 743,887,559060,B 674,916,56925a,B
1374,954,2248dd,B 1331,986,3062ae,B 1361,1019,2a58c4,B 1382,997,447b80,B 1301,1027,3266a4,B
767,439,72a838,S 799,451,6fa838,S 849,454,5ea03c,S 652,478,6fa838,S 666,511,72a838,S 683,506,7aad38,S 672,526,7aad38,S 866,501,5ea03c,S 866,513,66a338,S 573,594,72a838,S
539,677,72a838,S 521,701,72a838,S 393,822,7aad38,S 466,819,7aad38,S 347,851,8ab33c,S 192,917,7aad38,S 442,966,a5bb40,S 289,967,85b03a,S 191,1002,a5bb40,S 219,995,8ab33c,S
370,1000,72a838,S 216,1059,85b03a,S 273,1076,a5bb40,S 531,1058,85b03a,S 559,1068,a5bb40,S 584,1064,b4bf42,S 345,1103,a5bb40,S 277,1134,8ab33c,S 383,1166,a5bb40,S 264,1172,8ab33c,S
319,1186,72a838,S 455,1217,6fa838,S 361,1266,8ab33c,S 405,1263,6fa838,S 453,1266,8ab33c,G 502,1251,8ab33c,S 618,1159,b4bf42,S 704,1178,8ab33c,S 608,1211,8ab33c,S 716,1254,a5bb40,S
573,1287,8ab33c,S 664,1290,e3cc4d,Y 607,1332,a5bb40,S 619,1320,b9c145,G 834,1308,a0ba3e,S 870,1361,b4bf42,S 714,1335,cfc94a,G 728,1327,e3cc4d,Y 677,1372,e3cc4d,Y 745,1394,b9c145,G
771,1394,8ab33c,S 656,1407,a5bb40,G 852,1415,c6c84a,G 903,1396,b4bf42,S 903,1404,b4bf42,S 902,1413,a5bb40,S 771,1428,b4bf42,S 827,1487,b4bf42,S`);

const Scatter = ({ points, x0 }) => (
  <Plot>
    <svg width="470" height="470" viewBox={`${x0} 387 1410 1151.500`} preserveAspectRatio="none">
      {points.map((p, i) => (
        <ellipse key={i} cx={p.x} cy={p.y} rx={sizes[p.size][0]} ry={sizes[p.size][1]} fill={p.color} />
      ))}
    </svg>
  </Plot>
);

/* ---------- player ---------- */

const PlayerPanel = styled.div`
  display: flex;
  flex-direction: column;
  width: 646px;
  height: 338px;
  padding: 8px 10px 0;
  border-radius: 10px;
  background: #141414;
  flex-shrink: 0;
`;

const Groups = styled.div`
  display: flex;
  gap: ${(p) => p.$gap}px;
`;

const Group = styled.div`
  display: flex;
  flex-direction: ${(p) => (p.$column ? "column" : "row")};
  align-items: ${(p) => (p.$column ? "center" : "flex-start")};
  width: ${(p) => p.$w}px;
  height: ${(p) => p.$h}px;
  padding-left: ${(p) => p.$pl || 0}px;
  padding-right: ${(p) => p.$pr || 0}px;
  border-radius: 8px;
  background: #3e3e3e;
  flex-shrink: 0;
`;

const EnvelopeGrid = styled.div`
  display: grid;
  grid-template-columns: 72px 76px 70px 76px;
  grid-auto-rows: 26px;
  row-gap: 22px;
  padding-top: 13px;
`;

const EnvelopeLabel = styled.div`
  display: flex;
  justify-content: flex-end;
  padding-right: ${(p) => p.$pr}px;
`;

const WaveBox = styled.div`
  width: 624px;
  height: 158px;
  margin: 10px 0 9px;
  background: #1a1a1a;
`;

const LoopIcon = ({ color }) => (
  <g transform="translate(597 134)" fill="none" stroke={color} strokeWidth="2.500">
    <path d="M9 18.500C3 17 0.500 10 3 5" />
    <path d="M12 3C18 4 20.500 11 18 16" />
    <path d="M1 1.500H8V9.500Z" fill={color} stroke="none" />
    <path d="M20 19.500H12.500V12Z" fill={color} stroke="none" />
  </g>
);

const harpTop =
  "40,645 55,640 66,630 70,645 80,648 90,629 100,645 110,638 120,623 132,643 146,633 155,645 165,645 171,638 176,618 180,642 200,645 222,645 228,631 232,643 265,645 283,633 290,644 320,645 330,636 337,624 342,642 365,640 380,643 392,620 400,642 435,643 447,628 458,643 490,642 502,627 512,642 540,638 554,627 562,643 590,640 609,628 617,642 650,640 662,626 672,642 705,643 715,631 725,643 755,640 772,628 778,642 808,640 826,627 832,642 870,643 881,631 892,643 925,643 937,633 945,644 978,643 990,636 1000,644 1030,641 1043,637 1052,644 1085,643 1098,637 1110,644 1140,642 1154,636 1165,644 1195,643 1209,638 1222,644 1255,641 1265,640 1280,644 1315,641 1330,644 1375,643 1440,645 1516,645";
const harpBottom =
  "40,648 62,650 75,662 86,648 103,663 118,650 131,660 142,650 157,655 170,648 186,650 196,656 208,649 222,656 235,648 255,649 264,658 277,650 292,655 304,648 321,660 336,650 347,658 358,648 376,661 390,650 403,656 420,649 430,654 450,649 470,656 484,649 512,649 524,656 538,649 565,649 580,656 592,649 620,649 635,658 646,649 675,648 690,655 702,649 735,649 748,655 760,648 785,649 798,654 812,649 840,648 853,653 870,649 890,650 903,656 915,649 950,648 964,653 980,648 1005,651 1020,648 1060,650 1080,647 1115,651 1130,648 1170,650 1200,647 1235,650 1250,647 1300,649 1350,647 1390,647 1516,646";

const HarpWave = () => (
  <WaveBox>
    <svg width="624" height="158" viewBox="0 0 624 158">
      <rect width="624" height="158" fill="#1a1a1a" />
      <svg width="624" height="158" viewBox="38 408 1482 474" preserveAspectRatio="none">
        <path d="M40 880L112 408H1520V882H40Z" fill="#5a4a1c" />
        <path d="M40 880L112 408" stroke="#a37f2b" strokeWidth="2" vectorEffect="non-scaling-stroke" />
        <polygon points={`${harpTop} ${harpBottom.split(" ").reverse().join(" ")}`} fill="#f5bb41" />
      </svg>
      <rect x="0.500" y="0.500" width="623" height="157" fill="none" stroke="#000000" />
      <LoopIcon color="#aeaaa0" />
    </svg>
  </WaveBox>
);

const lobes = [
  [220, 251, 472], [250, 290, 813], [289, 331, 494], [331, 371, 762], [370, 412, 556], [412, 452, 717], [452, 493, 590],
  [493, 534, 688], [534, 574, 611], [574, 615, 671], [614, 656, 624], [656, 696, 661], [696, 738, 631], [738, 778, 656],
  [778, 820, 636], [820, 860, 652], [860, 902, 639], [902, 942, 649], [942, 984, 642], [1020, 1064, 642],
];

const AuxWave = () => (
  <WaveBox>
    <svg width="624" height="158" viewBox="0 0 624 158">
      <svg width="624" height="158" viewBox="43 408 1482 474" preserveAspectRatio="none" fill="#f5bb41">
        <rect x="178" y="643.500" width="1280" height="2.500" opacity="0.350" />
        <rect x="178" y="643" width="880" height="3" opacity="0.500" />
        <path d="M206 645L213 622L216 645Z" />
        <path d="M213 645L218 880L219 880L223 645Z" />
        {lobes.map(([a, b, y]) => {
          const k = 645 + (y - 645) * 1.3333;
          const w = b - a;
          return <path key={a} d={`M${a} 645C${a + 0.34 * w} ${k} ${a + 0.66 * w} ${k} ${b} 645Z`} />;
        })}
      </svg>
      <LoopIcon color="#e5923a" />
    </svg>
  </WaveBox>
);

const StretchMenu = styled(Menu)`
  border: 2px solid #141414;
  padding: 0 3px 0 2px;
`;

const MatchingPanel = styled.div`
  width: 197px;
  height: 113px;
  padding: 7px 0 0 14px;
  border-radius: 10px;
  background: linear-gradient(#3f3f3f, #3c3c3c);
  flex-shrink: 0;
`;

const MatchMenu = styled(Menu)`
  border: 2px solid ${c.line};
`;

const GainSlider = styled.div`
  ${offset}
  display: flex;
  align-items: center;
  justify-content: center;
  width: 82px;
  height: 26px;
  border: 2px solid ${c.field};
  background: linear-gradient(90deg, #3e3e3e 55px, ${c.field} 55px);
`;

const Notes = styled.div`
  width: 162px;
  height: 90px;
  margin: 44px 0 0 15px;
  overflow: hidden;
  font: 400 24px/27.2px "Liberation Sans", Arial, sans-serif;
  white-space: nowrap;
  flex-shrink: 0;
`;

const Value = ({ children, w = 59, color = c.sand }) => (
  <Text w={w} size={18.5} color={color} weight={400} lh={26} mt={0.5}>{children}</Text>
);

const SmallLabel = (p) => <Text size={18.5} weight={500} lh={24} {...p} />;

function Player({ m }) {
  return (
    <PlayerPanel>
      <Groups $gap={4.5}>
        <Group $w={313.5} $h={38} $pl={4}>
          <SmallLabel w={42} mt={5}>start</SmallLabel>
          <Field $ml={4} $mt={4} $justify="flex-start"><Value>0.00 %</Value></Field>
          <SmallLabel w={54} ml={12} mt={5}>length</SmallLabel>
          <Field $ml={6} $mt={4} $justify="flex-start"><Value w={54}>100 %</Value></Field>
          <SmallLabel w={22} ml={8} mt={5}>rel</SmallLabel>
        </Group>
        <Group $w={171} $h={38} $pl={8}>
          <SmallLabel w={53} mt={5}>voices</SmallLabel>
          <Field $ml={9} $mt={6} $w={44} $justify="center"><Value w={11}>{m.voices}</Value></Field>
          <SmallLabel w={41} ml={8} mt={7} color={m.stealOn ? c.sand : undefined}>steal</SmallLabel>
        </Group>
        <Group $w={130} $h={38} $pl={8}>
          <SmallLabel w={36} mt={5}>gain</SmallLabel>
          <Field $ml={8} $mt={6} $w={70}><Value w={m.gainWidth} color={c.blue}>{m.gain}</Value></Field>
        </Group>
      </Groups>
      {m.harp ? <HarpWave /> : <AuxWave />}
      <Groups $gap={0}>
        <Group $w={306} $h={104}>
          <EnvelopeGrid>
            <EnvelopeLabel $pr={5}><SmallLabel w={15} mt={2}>in</SmallLabel></EnvelopeLabel>
            <Field><Value>{m.fadeIn}</Value></Field>
            <EnvelopeLabel $pr={7}><SmallLabel w={29} mt={2}>out</SmallLabel></EnvelopeLabel>
            <Field><Value>0.00 %</Value></Field>
            <EnvelopeLabel $pr={4}><SmallLabel w={48} mt={2}>curve</SmallLabel></EnvelopeLabel>
            <Field $ml={2} $mt={1}><Value>0.00 %</Value></Field>
            <EnvelopeLabel $pr={6}><SmallLabel w={48} mt={2}>curve</SmallLabel></EnvelopeLabel>
            <Field><Value>0.00 %</Value></Field>
          </EnvelopeGrid>
        </Group>
        <Row $ml={11} $align="flex-start">
          <Group $w={104} $h={104} $pr={4} $column>
            <SmallLabel w={51}>speed</SmallLabel>
            <Row $mt={1}><Dial angle={m.speedAngle} /></Row>
            <Text w={m.speedWidth} size={18.5} weight={500} lh={20} mt={-3}>{m.speed}</Text>
          </Group>
        </Row>
        <Row $ml={9} $align="flex-start">
          <Group $w={194} $h={104} $column>
            <Row $mt={11} $ml={2}>
              <SmallLabel w={61} color={c.sand}>stretch</SmallLabel>
              <Field $w={92} $ml={12}><Value>0.00 st</Value></Field>
            </Row>
            <StretchMenu $w={168} $h={26} $mt={24} $ml={-2} $bg="#191919">
              <SmallLabel w={m.algoWidth} mt={1} color="#8c8c8c">{m.algo}</SmallLabel>
              <Arrow color="#5a5a5a" w={14} h={10} />
            </StretchMenu>
          </Group>
        </Row>
      </Groups>
    </PlayerPanel>
  );
}

function PlayerSide({ m }) {
  return (
    <Column>
      <Row $align="flex-start">
        <MatchingPanel>
          <Text w={82} size={18.5} ml={6} lh={22} weight={600}>matching</Text>
          <MatchMenu $w={132} $h={26} $mt={7} $pl={2} $pr={3} $bg="#3f3f3f">
            <SmallLabel w={m.matchWidth} mt={2}>{m.match}</SmallLabel>
            <Arrow w={14} h={10} color={c.text} />
          </MatchMenu>
          <Check on w={94} size={18.5} label="roundrobin" mt={9} />
        </MatchingPanel>
        <Column $ml={18}>
          <Text w={106} size={18.5} ml={3} mt={7} lh={22} weight={600}>compensate</Text>
          <Row $mt={8}>
            <MiniKnob label="loudness" lw={75} value="100" vw={34} angle={90} />
            <MiniKnob label="spectral" lw={70} value={m.spectral} vw={m.spectralWidth} angle={m.spectralAngle} ml={16} />
          </Row>
        </Column>
      </Row>
      <Row $align="flex-start" $mt={91}>
        <Column $w={202} $ml={15}>
          <Text w={131} size={18.5} lh={22} mt={3} weight={600}>data transpose</Text>
          <Row $mt={47}>
            <Text w={12} size={18.5} ml={1}>P</Text>
            <Field $w={92} $ml={17}><Value>0.00 st</Value></Field>
          </Row>
          <Row $mt={14}>
            <Text w={12} size={18.5} ml={1}>L</Text>
            <GainSlider $ml={17}><Value w={54}>0.0 dB</Value></GainSlider>
          </Row>
        </Column>
        <Column>
          <Text w={102} size={18.5} lh={22} ml={5} mt={1} weight={600}>use tonality</Text>
          <Column $mt={16}>
            {m.modes.map(([name, w], i) => (
              <Button key={name} $w={160} $h={26} $mt={i ? 6 : 0} $on={name === m.mode}>
                <SmallLabel w={w} mt={1} color={name === m.mode ? c.line : undefined}>{name}</SmallLabel>
              </Button>
            ))}
          </Column>
        </Column>
        <Notes>
          <div>default analyis o</div>
          <div>sequence of rec</div>
          <div>onset pitch qua</div>
        </Notes>
      </Row>
    </Column>
  );
}

const gaps = [4, 4, 2, 4, 2, 0];

function CorpusModule({ m, options }) {
  return (
    <Module>
      <Row $h={124} $align="flex-start">{options}</Row>
      <CorpusArea>
        <CorpusLeft>
          <Row $h={42}>
            <Text w={118} ml={4} mt={1} weight={600}>cello setup</Text>
            <Box $on $w={36} $h={38} $ml={14} />
            <RangeSlider>
              <RangeTrack $w={m.range[0] - 4} />
              <RangeFill $w={m.range[1] - m.range[0]} />
              <RangeTrack $w={551 - m.range[1]} />
            </RangeSlider>
          </Row>
          <Row $h={46} $mt={32}>
            <Text w={181} size={29} ml={4} mt={-2} lh={34} weight={600}>filter corpus</Text>
            <Menu $w={390} $h={46} $ml={49} $pl={12}>
              <Text w={m.nameWidth} mt={2}>{m.name}</Text>
              <Arrow w={18} h={9} />
            </Menu>
            <Ring $ml={22} />
          </Row>
          <Row $h={44} $mt={10}>
            <Text w={111} ml={2} mt={2}>time cntrd</Text>
            <Compare op="<=" ml={-1} />
            <NumberBox $w={126} $ml={3}>
              <NumberMark />
              <Text w={40} arial size={24} weight={400} ml={4}>200</Text>
            </NumberBox>
            <Text w={27} arial size={16} weight={400} ml={10} mt={3}>min</Text>
            <Text w={40} arial size={16} weight={400} ml={15} mt={3}>{m.stats[0]}</Text>
            <Text w={31} arial size={16} weight={400} ml={38} mt={3}>max</Text>
            <Text w={58} arial size={16} weight={400} ml={17} mt={3}>{m.stats[1]}</Text>
            <Text w={40} arial size={16} weight={400} ml={36} mt={3}>mean</Text>
            <Text w={m.meanWidth} arial size={16} weight={400} ml={16} mt={3}>{m.stats[2]}</Text>
          </Row>
          <FilterList>
            {m.filters.map((row, i) => (
              <FilterRow key={row.name} $mb={gaps[i]}>
                <Menu $w={201}>
                  <Text w={row.w} arial size={24} weight={400} mt={1}>{row.name}</Text>
                  <Arrow />
                </Menu>
                <Compare op={row.op || "<="} ml={5.4} mt={2} />
                <FilterTrack row={row} />
                <Ring $ml={9.6} $mt={9} />
              </FilterRow>
            ))}
          </FilterList>
        </CorpusLeft>
        <Column $w={470}>
          <Column $w={470} $align="center"><Text w={68} size={18.5} lh={22} mt={-8} weight={600}>weights</Text></Column>
          <Row $ml={40} $mt={0} $h={102} $align="flex-end">
            <Knob label="loudness" lw={75} {...m.weights[0]} />
            <Knob label="centroid" lw={72} {...m.weights[1]} ml={32} />
            <Knob label="flatness" lw={68} {...m.weights[2]} ml={36} />
            <Knob label="pitch" lw={44} {...m.weights[3]} ml={34} />
          </Row>
          <Scatter points={m.points} x0={m.x0} />
        </Column>
      </CorpusArea>
      <Row $mt={32} $ml={4} $h={38}>
        <Box $on $w={38} $h={38} />
        <Text w={90} size={30} ml={14} mt={3} lh={34} weight={600}>player</Text>
        <Text w={m.titleWidth} size={30} ml={72} mt={3} lh={34} weight={400}>{m.name}</Text>
      </Row>
      <Row $mt={12} $align="flex-start">
        <Player m={m} />
        <PlayerSide m={m} />
      </Row>
    </Module>
  );
}

const harp = {
  harp: true, name: "harp-novachord", nameWidth: 171, titleWidth: 229, range: [22, 522], stats: ["32.00", "5947.21", "1891.29"], meanWidth: 58,
  filters: [
    { name: "duration", w: 87, marker: 97.4, limit: 332 },
    { name: "loudness_all", w: 133, marker: 143.5, limit: 218 },
    { name: "centroid_all", w: 123, marker: 171.5, limit: 332 },
    { name: "pitch_all", w: 88, marker: 147.5, limit: 120, op: ">=" },
    { name: "pitch_confid...", w: 148, marker: 41.5, limit: 332 },
    { name: "flatness_all", w: 120, marker: 215.5, limit: 332 },
  ],
  weights: [
    { value: "50.2 %", vw: 59, angle: -26 },
    { value: "33.0 %", vw: 59, angle: -41 },
    { value: "0.00 %", vw: 59, angle: -151 },
    { value: "100 %", vw: 53, angle: 0 },
  ],
  points: harpPoints, x0: 42, voices: "3", gain: "75.0 %", gainWidth: 59, fadeIn: "5.00 %",
  speed: "50.0 %", speedWidth: 59, speedAngle: -36, algo: "extremestretch", algoWidth: 131,
  match: "all", matchWidth: 19, spectral: "50.0", spectralWidth: 40, spectralAngle: 21,
  modes: [["none", 42], ["sequence", 81], ["quantize", 73]], mode: "quantize",
};

const aux = {
  name: "aux-percussion", nameWidth: 161, titleWidth: 217, range: [48, 468], stats: ["28.29", "1790.50", "340.99"], meanWidth: 49,
  filters: [
    { name: "duration", w: 87, marker: 55.2, limit: 332 },
    { name: "loudness", w: 96, marker: 191.6, limit: 332 },
    { name: "centroid_all", w: 123, marker: 183.2, limit: 232 },
    { name: "pitch_all", w: 88, marker: 217.2, limit: 332 },
    { name: "pitch_confid...", w: 148, marker: 51.5, limit: 332 },
    { name: "flatness_all", w: 120, marker: 109.2, limit: 332 },
  ],
  weights: [
    { value: "75.0 %", vw: 59, angle: -10 },
    { value: "125 %", vw: 53, angle: 10 },
    { value: "75.0 %", vw: 59, angle: -10 },
    { value: "25.0 %", vw: 59, angle: -50 },
  ],
  points: auxPoints, x0: 78, voices: "8", stealOn: true, gain: "100 %", gainWidth: 53, fadeIn: "0.00 %",
  speed: "100 %", speedWidth: 53, speedAngle: 0, algo: "basic", algoWidth: 44,
  match: "short", matchWidth: 43, spectral: "100", spectralWidth: 34, spectralAngle: 90,
  modes: [["normal", 59], ["sequence", 81], ["scale-quantize", 124]], mode: "normal",
};

const toggles = [["bow dropouts", 117], ["length from timing", 157], ["reverse on bow sustain", 194], ["granular on periodicity", 193]];

const ToggleSlot = styled.div`
  width: 312px;
  flex-shrink: 0;
`;

export default function App() {
  return (
    <>
      <GlobalStyle />
      <Window>
        <Main>
          <Patcher>
            <TopBand>
              <ScopeColumn />
              <GestureColumn />
              <Mixer />
              <SideSwitches />
              <Transport />
              <PitchArea />
            </TopBand>
            <BottomBand>
              <Tonality />
              <CorpusModule
                m={harp}
                options={
                  <Row $ml={-8} $mt={62}>
                    {toggles.map(([label, w]) => (
                      <ToggleSlot key={label}><Check label={label} w={w} size={18.5} /></ToggleSlot>
                    ))}
                  </Row>
                }
              />
              <CorpusModule
                m={aux}
                options={
                  <>
                    <Knob label="loopzoop-probability" lw={177} value="50.0 %" vw={59} angle={0} ml={11} w={177} />
                    <Check on w={173} label="delay-transform" ml={38} mt={62} />
                  </>
                }
              />
            </BottomBand>
          </Patcher>
          <HScroll />
        </Main>
        <Gutter><VThumb /></Gutter>
        <Edge />
      </Window>
    </>
  );
}
